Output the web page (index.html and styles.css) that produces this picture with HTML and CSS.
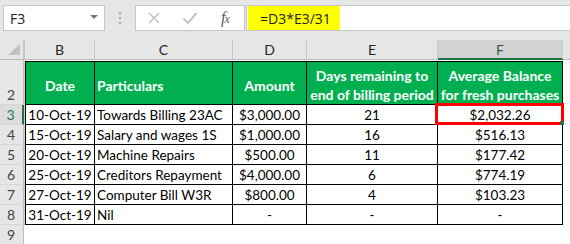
FILE: index.html
```html
<!DOCTYPE html>
<html>
<head>
<meta charset="utf-8">
<link rel="stylesheet" href="styles.css">
</head>
<body>
<div class="app">
  <div class="toolbar">
    <div class="namebox"><span class="ref">F3</span><span class="caret"></span></div>
    <div class="dots"><i></i><i></i><i></i></div>
    <div class="fxbox">
      <svg class="ico" width="14" height="14" viewBox="0 0 14 14"><path d="M2 2 L12 12 M12 2 L2 12" stroke="#c3c3c3" stroke-width="1.6" fill="none"/></svg>
      <svg class="ico" width="16" height="14" viewBox="0 0 16 14"><path d="M1.5 7.5 L6 12 L14.5 2" stroke="#c3c3c3" stroke-width="2" fill="none"/></svg>
      <span class="fx">f<span class="sx">x</span></span>
    </div>
    <div class="formula"><span class="hl">=D3*E3/31</span></div>
  </div>
  <div class="sheet">
    <div class="corner"><svg width="24" height="20" viewBox="0 0 24 20"><path d="M8 15 L20 4 L20 15 Z" fill="#c1c1c1"/></svg></div>
    <div class="ch cha"></div>
    <div class="ch">B</div>
    <div class="ch">C</div>
    <div class="ch">D</div>
    <div class="ch">E</div>
    <div class="ch sel">F</div>
    <div class="ch fill"></div>

    <div class="rh r1"></div>
    <div class="blank span7"></div>

    <div class="rh">2</div>
    <div class="a"></div>
    <div class="c hd first">Date</div>
    <div class="c hd left">Particulars</div>
    <div class="c hd">Amount</div>
    <div class="c hd">Days remaining to end of billing period</div>
    <div class="c hd">Average Balance for fresh purchases</div>
    <div class="blank"></div>

    <div class="rh selr">3</div>
    <div class="a"></div>
    <div class="c first">10-Oct-19</div>
    <div class="c left">Towards Billing 23AC</div>
    <div class="c">$3,000.00</div>
    <div class="c">21</div>
    <div class="c active">$2,032.26<span class="box"></span><span class="handle"></span></div>
    <div class="blank"></div>

    <div class="rh">4</div>
    <div class="a"></div>
    <div class="c first">15-Oct-19</div>
    <div class="c left">Salary and wages 1S</div>
    <div class="c">$1,000.00</div>
    <div class="c">16</div>
    <div class="c">$516.13</div>
    <div class="blank"></div>

    <div class="rh">5</div>
    <div class="a"></div>
    <div class="c first">20-Oct-19</div>
    <div class="c left">Machine Repairs</div>
    <div class="c">$500.00</div>
    <div class="c">11</div>
    <div class="c">$177.42</div>
    <div class="blank"></div>

    <div class="rh">6</div>
    <div class="a"></div>
    <div class="c first">25-Oct-19</div>
    <div class="c left">Creditors Repayment</div>
    <div class="c">$4,000.00</div>
    <div class="c">6</div>
    <div class="c">$774.19</div>
    <div class="blank"></div>

    <div class="rh">7</div>
    <div class="a"></div>
    <div class="c first">27-Oct-19</div>
    <div class="c left">Computer Bill W3R</div>
    <div class="c">$800.00</div>
    <div class="c">4</div>
    <div class="c">$103.23</div>
    <div class="blank"></div>

    <div class="rh">8</div>
    <div class="a"></div>
    <div class="c first">31-Oct-19</div>
    <div class="c left">Nil</div>
    <div class="c">-</div>
    <div class="c">-</div>
    <div class="c">-</div>
    <div class="blank"></div>

    <div class="rh last">9</div>
    <div class="blank span7"></div>
  </div>
</div>
</body>
</html>
```

FILE: styles.css
```css
* { box-sizing: border-box; }
html, body { margin: 0; padding: 0; }
body {
  width: 570px;
  height: 244px;
  overflow: hidden;
  background: #e6e6e6;
  font-family: Lato, "Open Sans", sans-serif;
}
.app { display: flex; flex-direction: column; height: 244px; }

.toolbar {
  height: 41px;
  display: flex;
  align-items: flex-start;
  padding-top: 5px;
  background: #e6e6e6;
}
.namebox {
  margin-left: 3px;
  width: 102px;
  height: 26px;
  background: #fff;
  border: 1px solid #c6c6c6;
  display: flex;
  align-items: center;
  justify-content: space-between;
  padding: 0 6px 0 6px;
  font-family: "Open Sans", sans-serif;
  font-size: 14px;
  color: #222;
}
.caret {
  width: 0; height: 0;
  border-left: 4px solid transparent;
  border-right: 4px solid transparent;
  border-top: 4px solid #7a7a7a;
  margin-top: -2px;
}
.dots {
  width: 30px;
  height: 26px;
  display: flex;
  flex-direction: column;
  align-items: center;
  justify-content: center;
  gap: 3px;
}
.dots i { display: block; width: 2px; height: 2px; background: #a8a8a8; }
.fxbox {
  width: 110px;
  height: 26px;
  background: #fff;
  border: 1px solid #c6c6c6;
  display: flex;
  align-items: center;
  padding-left: 11px;
}
.fxbox .ico { margin-right: 21px; }
.fx {
  font-family: "Liberation Serif", serif;
  font-style: italic;
  font-size: 16px;
  color: #5a5a5a;
  letter-spacing: -1px;
  margin-left: 2px;
}
.fx .sx { font-size: 12px; }
.formula {
  flex: 1;
  height: 26px;
  margin-left: 1px;
  background: #fff;
  border-top: 1px solid #c6c6c6;
  border-bottom: 1px solid #c6c6c6;
  border-left: 1px solid #c6c6c6;
  padding-left: 1px;
  display: flex;
}
.hl {
  background: #ffff00;
  height: 100%;
  display: flex;
  align-items: center;
  padding: 0 9px 0 12px;
  font-family: "Open Sans", sans-serif;
  font-size: 14px;
  color: #222;
}

.sheet {
  flex: 1;
  display: grid;
  grid-template-columns: 24px 1px 70px 138px 74px 131px 125px 1fr;
  grid-template-rows: 20px 1px 44px repeat(6, 20px) 1fr;
  background: #fff;
  font-size: 14px;
}
.corner {
  background: #e6e6e6;
  border-bottom: 1px solid #bdbdbd;
  border-right: 1px solid #c6c6c6;
}
.corner svg { display: block; }
.ch {
  background: #e6e6e6;
  border-right: 1px solid #c8c8c8;
  border-bottom: 1px solid #bdbdbd;
  display: flex;
  align-items: center;
  justify-content: center;
  color: #262626;
  font-size: 14px;
}
.ch.fill { border-right: none; }
.ch.sel {
  background: #d2d2d2;
  border-bottom: 2px solid #217346;
  color: #2d5e3c;
}
.rh {
  background: #e6e6e6;
  border-right: 1px solid #bdbdbd;
  border-bottom: 1px solid #d6d6d6;
  display: flex;
  align-items: flex-end;
  justify-content: center;
  padding-bottom: 1px;
  color: #444;
  font-size: 14px;
  padding-right: 1px;
}
.rh.r1 { border-bottom: none; }
.rh.last { align-items: flex-start; padding-top: 1px; border-bottom: none; }
.rh.selr {
  background: #dcdcdc;
  color: #217346;
  border-right: 2px solid #217346;
}
.a { background: #fff; border-left: 1px solid #d0d0d0; }
.blank { background: #fff; }
.span7 { grid-column: span 7; }

.c {
  border-right: 1px solid #000;
  border-bottom: 1px solid #000;
  display: flex;
  align-items: center;
  justify-content: center;
  color: #000;
  white-space: nowrap;
  padding: 0 2px;
  font-size: 13.5px;
}
.c.first { border-left: 1px solid #000; }
.c.left { justify-content: flex-start; padding-left: 2px; }
.c.hd {
  border-top: 1px solid #000;
  background: #00b050;
  color: #fff;
  font-weight: bold;
  font-size: 14px;
  white-space: normal;
  text-align: center;
  line-height: 19px;
  padding-top: 4px;
}
.c.active { position: relative; }
.box {
  position: absolute;
  left: -3px;
  right: -2px;
  top: -2px;
  bottom: -1px;
  border: 3px solid #ff0000;
}
.handle {
  position: absolute;
  right: -2px;
  bottom: -1px;
  width: 4px;
  height: 4px;
  background: #217346;
}
```
